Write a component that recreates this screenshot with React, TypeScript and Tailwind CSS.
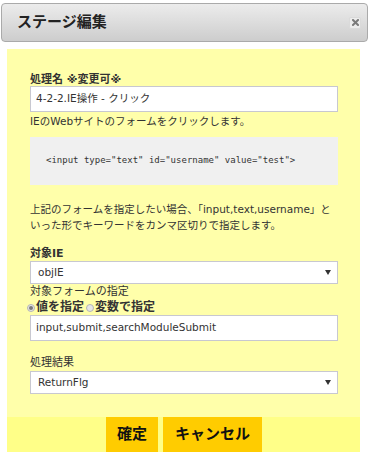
import React from 'react';

const jp = { fontFamily: '"DejaVu Sans", "Noto Sans CJK JP", sans-serif' };

const Select = ({ value }: { value: string }) => (
  <div className="flex items-center justify-between h-[23px] bg-white border border-[#c8c8d0] pl-[7px] pr-[6px] text-[10.5px] text-[#333]">
    <span>{value}</span>
    <svg width="6" height="5" viewBox="0 0 6 5">
      <path d="M0 0H6L3 5Z" fill="#333" />
    </svg>
  </div>
);

const Radio = ({ checked }: { checked?: boolean }) => (
  <span className="inline-flex items-center justify-center w-[8px] h-[8px] rounded-full border border-[#b5b5b5] bg-[#e6e6e6] mr-[1px]">
    {checked && <span className="w-[4px] h-[4px] rounded-full bg-[#7a7a7a]" />}
  </span>
);

export default function App() {
  return (
    <div className="w-[370px] h-[458px] bg-white pt-[3px] overflow-hidden text-[#333]" style={jp}>
      {/* ヘッダー */}
      <div className="ml-[1px] w-[367px] h-[39px] rounded-[4px] border border-[#aaa] bg-gradient-to-b from-[#ececec] to-[#cdcdcd] flex items-center justify-between pl-[15px] pr-[6px]">
        <span className="text-[15px] font-bold text-[#222]">ステージ編集</span>
        <span className="w-[12px] h-[12px] rounded-[2px] bg-[#ececec] border border-[#dadada] flex items-center justify-center">
          <svg width="7" height="7" viewBox="0 0 7 7">
            <path d="M1 1L6 6M6 1L1 6" stroke="#7a7a7a" strokeWidth="2" strokeLinecap="square" />
          </svg>
        </span>
      </div>

      {/* 本体 */}
      <div className="mt-[7px] ml-[7px] w-[353px] bg-[#ffffaa]">
        <div className="pt-[24px] pl-[23px] pr-[22px] pb-[23px] text-[10.5px]">
          <div className="font-bold text-[11px] leading-[13px]">処理名 ※変更可※</div>
          <div className="h-[26px] bg-white border border-[#c8c8d0] flex items-center pl-[5px]">4-2-2.IE操作 - クリック</div>
          <div className="leading-[18px]">IEのWebサイトのフォームをクリックします。</div>

          <div className="mt-[7px] h-[48px] bg-[#f0f0f0] flex items-center pl-[16px] text-[9px]" style={{ fontFamily: '"DejaVu Sans Mono", monospace' }}>
            {'<input type="text" id="username" value="test">'}
          </div>

          <p className="mt-[16px] leading-[16px] whitespace-nowrap">
            上記のフォームを指定したい場合、「input,text,username」と
            <br />
            いった形でキーワードをカンマ区切りで指定します。
          </p>

          <div className="mt-[14px] font-bold text-[11px] leading-[14px]">対象IE</div>
          <Select value="objIE" />

          <div className="text-[11px] leading-[16px]">対象フォームの指定</div>
          <div className="flex items-center h-[15px] -ml-[3px] text-[12px] font-bold leading-[15px]">
            <Radio checked />
            <span className="mr-[2px]">値を指定</span>
            <Radio />
            <span>変数で指定</span>
          </div>
          <div className="h-[26px] bg-white border border-[#c8c8d0] flex items-center pl-[5px]">input,submit,searchModuleSubmit</div>

          <div className="mt-[14px] text-[11px] leading-[16px]">処理結果</div>
          <Select value="ReturnFlg" />
        </div>

        {/* ボタン */}
        <div className="h-[35px] bg-[#ffff88] flex justify-center gap-[5px] pl-[1px]">
          <button className="w-[52px] h-full bg-[#ffcc00] text-[15px] font-bold text-[#111]">確定</button>
          <button className="w-[99px] h-full bg-[#ffcc00] text-[15px] font-bold text-[#111]">キャンセル</button>
        </div>
      </div>
    </div>
  );
}
